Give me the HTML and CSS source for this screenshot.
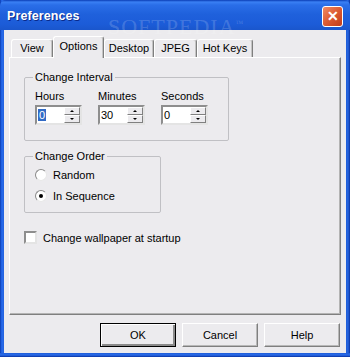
FILE: index.html
```html
<!DOCTYPE html>
<html>
<head>
  <meta charset='UTF-8'>
  <title>Preferences</title>
  <link rel="stylesheet" href="styles.css">
</head>
<body>
  <div class='win'>
    <div class='tb'>
      <span class='tt'>Preferences</span>
      <span class='x'>&#x2715;</span>
    </div>
    <div class='wm'>SOFTPEDIA<sup>™</sup></div>

    <div class='cl'>
      <div class='tabs'>
        <div class='tab' style='width:42px'>View</div>
        <div class='tab sel' style='width:51px'>Options</div>
        <div class='tab' style='width:50px'>Desktop</div>
        <div class='tab' style='width:43px'>JPEG</div>
        <div class='tab' style='width:56px'>Hot Keys</div>
      </div>

      <div class='pn'>
        <fieldset class='g g1'>
          <legend>Change Interval</legend>
          <div class='cols'>
            <div class='col'>
              <div class='lb'>Hours</div>
              <div class='sp'><span class='f'><span class='hi'>0</span></span><span class='ar'><i class='up'></i><i class='dn'></i></span></div>
            </div>
            <div class='col'>
              <div class='lb'>Minutes</div>
              <div class='sp'><span class='f'>30</span><span class='ar'><i class='up'></i><i class='dn'></i></span></div>
            </div>
            <div class='col'>
              <div class='lb'>Seconds</div>
              <div class='sp'><span class='f'>0</span><span class='ar'><i class='up'></i><i class='dn'></i></span></div>
            </div>
          </div>
        </fieldset>

        <fieldset class='g g2'>
          <legend>Change Order</legend>
          <div class='rd'><span class='ci'></span>Random</div>
          <div class='rd'><span class='ci on'></span>In Sequence</div>
        </fieldset>

        <div class='ck'><span class='bx'></span>Change wallpaper at startup</div>
      </div>

      <div class='btns'>
        <div class='btn def'>OK</div>
        <div class='btn'>Cancel</div>
        <div class='btn'>Help</div>
      </div>
    </div>
  </div>
</body>
</html>
```

FILE: styles.css
```css
body{margin:0;background:#fff;font-family:"Liberation Sans",Arial,sans-serif;font-size:11px;color:#000;}
.win{position:relative;width:350px;height:357px;box-sizing:border-box;display:flex;flex-direction:column;padding:0 4px 4px 4px;background:linear-gradient(to right,#0831a0 0,#1c5ee0 1px,#2b6cea 3px,#1d5cd8 4px,#1d5cd8 346px,#2765e0 348px,#0831a0 350px);overflow:hidden;}
.win:after{content:'';position:absolute;left:0;right:0;bottom:0;height:4px;background:linear-gradient(#1d5cd8,#2b6cea 2px,#0831a0);}
.tb{height:30px;margin:0 -4px;padding:0 7px 0 7px;display:flex;align-items:center;justify-content:space-between;background:linear-gradient(#0a3db5 0,#3a80f4 2px,#2a6ee8 5px,#1f61dc 14px,#1c5cd8 24px,#1a56cc 30px);border-radius:6px 6px 0 0;}
.tt{color:#fff;font-weight:bold;font-size:12.5px;letter-spacing:.1px;margin-top:2px;text-shadow:1px 1px 0 #0a2a8a;}
.x{width:19px;height:19px;margin-top:2px;border:1px solid #fff;border-radius:3px;background:linear-gradient(135deg,#f08a64,#dc5a32 50%,#c23c1a);color:#fff;font-weight:bold;font-size:14px;line-height:19px;text-align:center;}
.wm{position:absolute;left:108px;top:14px;font-family:"Liberation Serif",serif;font-size:22px;letter-spacing:1px;color:rgba(255,255,255,.18);}
.wm sup{font-size:8px;}
.cl{flex:1;background:#ecebee;padding:6px 5px 6px 5px;display:flex;flex-direction:column;}
.tabs{display:flex;height:21px;padding-left:2px;align-items:flex-end;position:relative;z-index:1;}
.tab{box-sizing:border-box;height:18px;border:1px solid #fff;border-bottom:none;border-right:1px solid #7f7f7f;border-radius:3px 3px 0 0;box-shadow:inset -1px 0 #c4c4c4;text-align:center;line-height:17px;}
.tab.sel{height:22px;line-height:19px;background:#ecebee;margin-bottom:-1px;}
.pn{height:258px;box-sizing:border-box;border:1px solid #fff;border-right-color:#7f7f7f;border-bottom-color:#7f7f7f;box-shadow:inset -1px -1px #b4b4b4;padding:0 0 0 14px;}
.g{margin:0;padding:0 0 0 10px;border:1px solid #c0c0c4;border-radius:2px;box-sizing:border-box;}
.g legend{padding:0 2px;margin-left:-2px;line-height:13px;}
.g1{width:205px;height:70px;margin-top:13px;}
.cols{display:flex;gap:16px;margin-top:6px;}
.col{width:47px;}
.lb{line-height:13px;margin-bottom:2px;}
.sp{display:flex;height:20px;box-sizing:border-box;border:2px solid;border-color:#8e8e8e #e4e4e4 #e4e4e4 #8e8e8e;background:#fff;}
.f{flex:1;padding-left:1px;line-height:16px;}
.hi{background:#316ac5;color:#fff;padding:0 1px;}
.ar{width:16px;display:flex;flex-direction:column;}
.ar i{flex:1;box-sizing:border-box;border:1px solid;border-color:#fff #808080 #808080 #fff;background:#ecebee;position:relative;}
.ar i:after{content:'';position:absolute;left:5px;top:2px;border:2px solid transparent;}
.ar .up:after{border-bottom-color:#000;top:0;}
.ar .dn:after{border-top-color:#000;top:2px;}
.g2{width:137px;height:63px;margin-top:9px;padding-left:10px;}
.rd{display:flex;align-items:center;height:13px;margin-top:6px;}
.rd+.rd{margin-top:8px;}
.rd:first-of-type{margin-top:5px;}
.ci{width:12px;height:12px;box-sizing:border-box;border-radius:50%;border:1px solid;border-color:#8a8a8a #e8e8e8 #e8e8e8 #8a8a8a;background:#fff;margin-right:6px;position:relative;}
.ci.on:after{content:'';position:absolute;left:3px;top:3px;width:4px;height:4px;border-radius:50%;background:#000;}
.ck{display:flex;align-items:center;margin-top:18px;}
.bx{width:13px;height:13px;box-sizing:border-box;border:2px solid;border-color:#8e8e8e #e4e4e4 #e4e4e4 #8e8e8e;background:#fff;margin-right:6px;}
.btns{display:flex;justify-content:flex-end;gap:6px;margin-top:8px;padding-right:1px;}
.btn{width:76px;height:24px;box-sizing:border-box;border:1px solid;border-color:#fff #7f7f7f #7f7f7f #fff;box-shadow:inset -1px -1px #b8b8b8;text-align:center;line-height:22px;}
.btn.def{border:1px solid #000;box-shadow:inset 1px 1px #fff,inset -2px -2px #8a8a8a;}
```
